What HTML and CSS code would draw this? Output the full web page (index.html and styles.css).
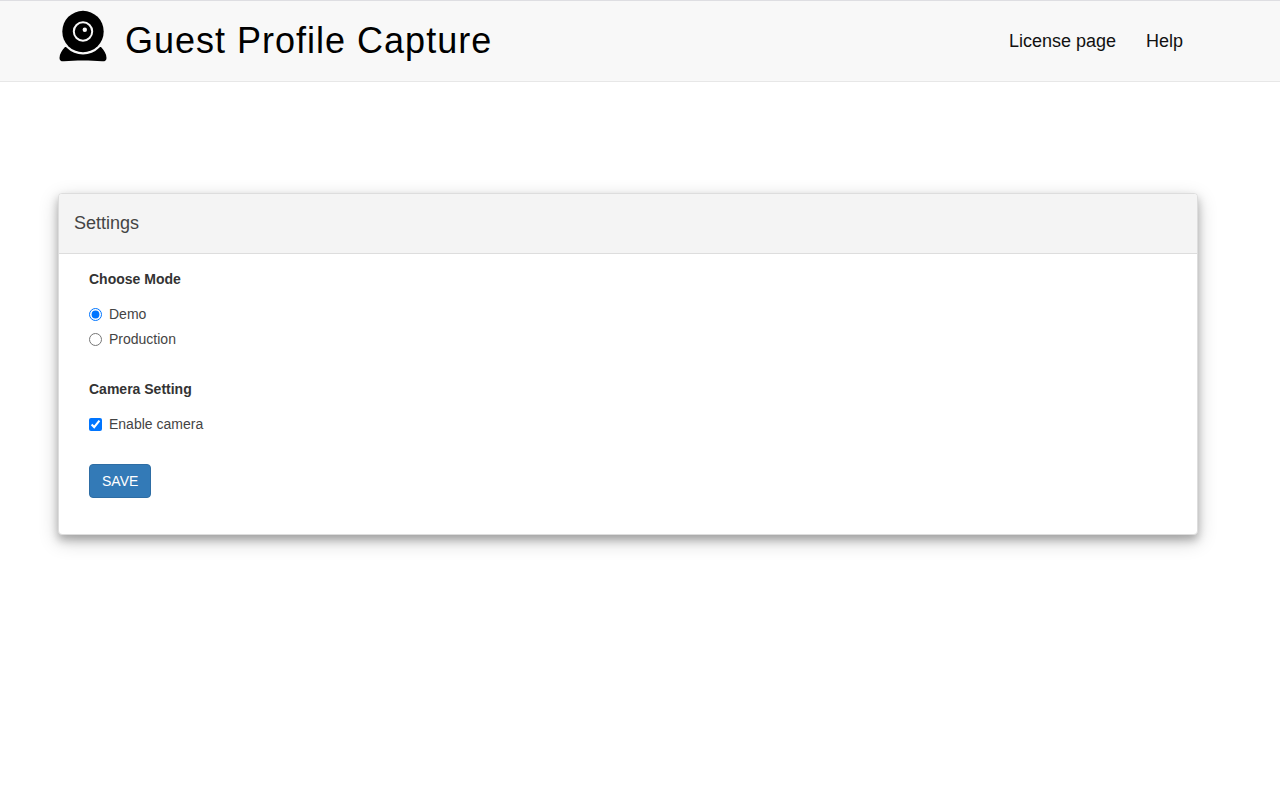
FILE: index.html
```
<!DOCTYPE html>
<html lang="en">
<head>
    <meta charset="UTF-8">
    <meta name="viewport" content="width=device-width, initial-scale=1.0">
    <title>Guest Profile Capture</title>
    <link rel="stylesheet" href="styles.css">
</head>
<body>
    <!-- Top navigation -->
    <header class="navbar">
        <a class="brand" href="#">
            <svg class="brand-logo" viewBox="0 0 48 52" aria-hidden="true">
                <path d="M6 37 C3 40 0.5 44 0.5 48 C0.5 50.5 2 51.5 5 51.3 C11 50.8 17 50.5 24 50.5 C31 50.5 37 50.8 43 51.3 C46 51.5 47.5 50.5 47.5 48 C47.5 44 45 40 42 37 Z"/>
                <circle class="logo-gap" cx="24" cy="21.5" r="23"/>
                <circle cx="24" cy="21.5" r="20.7"/>
                <circle class="logo-ring" cx="24" cy="21.5" r="9.2"/>
                <circle class="logo-glint" cx="25.8" cy="19.7" r="2.2"/>
            </svg>
            <span class="brand-name">Guest Profile Capture</span>
        </a>
        <nav class="nav-links">
            <a href="#">License page</a>
            <a href="#">Help</a>
        </nav>
    </header>

    <!-- Settings panel -->
    <main class="container">
        <section class="panel">
            <div class="panel-heading">
                <h1>Settings</h1>
            </div>
            <form class="panel-body">
                <fieldset>
                    <legend>Choose Mode</legend>
                    <div class="option">
                        <input type="radio" id="demo" name="mode" value="demo" checked>
                        <label for="demo">Demo</label>
                    </div>
                    <div class="option">
                        <input type="radio" id="production" name="mode" value="production">
                        <label for="production">Production</label>
                    </div>
                </fieldset>

                <fieldset>
                    <legend>Camera Setting</legend>
                    <div class="option">
                        <input type="checkbox" id="camera" name="camera" checked>
                        <label for="camera">Enable camera</label>
                    </div>
                </fieldset>

                <button type="button" class="btn">SAVE</button>
            </form>
        </section>
    </main>
</body>
</html>
```
FILE: styles.css
```
* {
    box-sizing: border-box;
}

body {
    margin: 0;
    font-family: "Liberation Sans", Arial, sans-serif;
    font-size: 14px;
    line-height: 20px;
    color: #333;
    background: #fff;
}

.navbar {
    display: flex;
    justify-content: space-between;
    align-items: center;
    min-height: 82px;
    padding: 0 97px 0 59px;
    background-color: #f8f8f8;
    border-top: 1px solid #dedee2;
    border-bottom: 1px solid #e7e7e7;
}

.navbar a {
    color: #111;
    text-decoration: none;
}

.navbar .brand {
    display: flex;
    align-items: center;
    gap: 18px;
    color: #000;
}

.brand-logo {
    width: 48px;
    height: 52px;
    margin-bottom: 10px;
}

.logo-gap {
    fill: #f8f8f8;
}

.logo-ring {
    fill: none;
    stroke: #f8f8f8;
    stroke-width: 2;
}

.logo-glint {
    fill: #f8f8f8;
}

.brand-name {
    font-size: 36px;
    line-height: 40px;
    letter-spacing: 1px;
}

.nav-links {
    display: flex;
    gap: 30px;
    font-size: 18px;
}

.container {
    padding: 111px 82px 40px 58px;
}

.panel {
    background-color: #fff;
    border: 1px solid #ddd;
    border-radius: 4px;
    box-shadow: 0 5px 8px rgba(0, 0, 0, 0.25), 0 6px 20px rgba(0, 0, 0, 0.2);
}

.panel-heading {
    padding: 19px 15px 20px;
    background-color: #f4f4f4;
    border-bottom: 1px solid #ddd;
    border-radius: 3px 3px 0 0;
}

.panel-heading h1 {
    margin: 0;
    font-size: 18px;
    font-weight: normal;
    line-height: 20px;
    color: #444;
}

.panel-body {
    padding: 15px 30px 36px;
}

fieldset {
    margin: 0 0 30px;
    padding: 0;
    border: none;
}

legend {
    padding: 0;
    margin-bottom: 15px;
    font-weight: bold;
}

.option {
    display: flex;
    align-items: center;
    gap: 7px;
    color: #444;
}

.option + .option {
    margin-top: 5px;
}

.option input {
    width: 13px;
    height: 13px;
    margin: 1px 0 0;
}

.btn {
    display: block;
    padding: 6px 12px;
    font-family: inherit;
    font-size: 14px;
    line-height: 20px;
    color: #fff;
    background-color: #337ab7;
    border: 1px solid #2e6da4;
    border-radius: 4px;
    cursor: pointer;
}

.btn:hover {
    background-color: #286090;
}
```
